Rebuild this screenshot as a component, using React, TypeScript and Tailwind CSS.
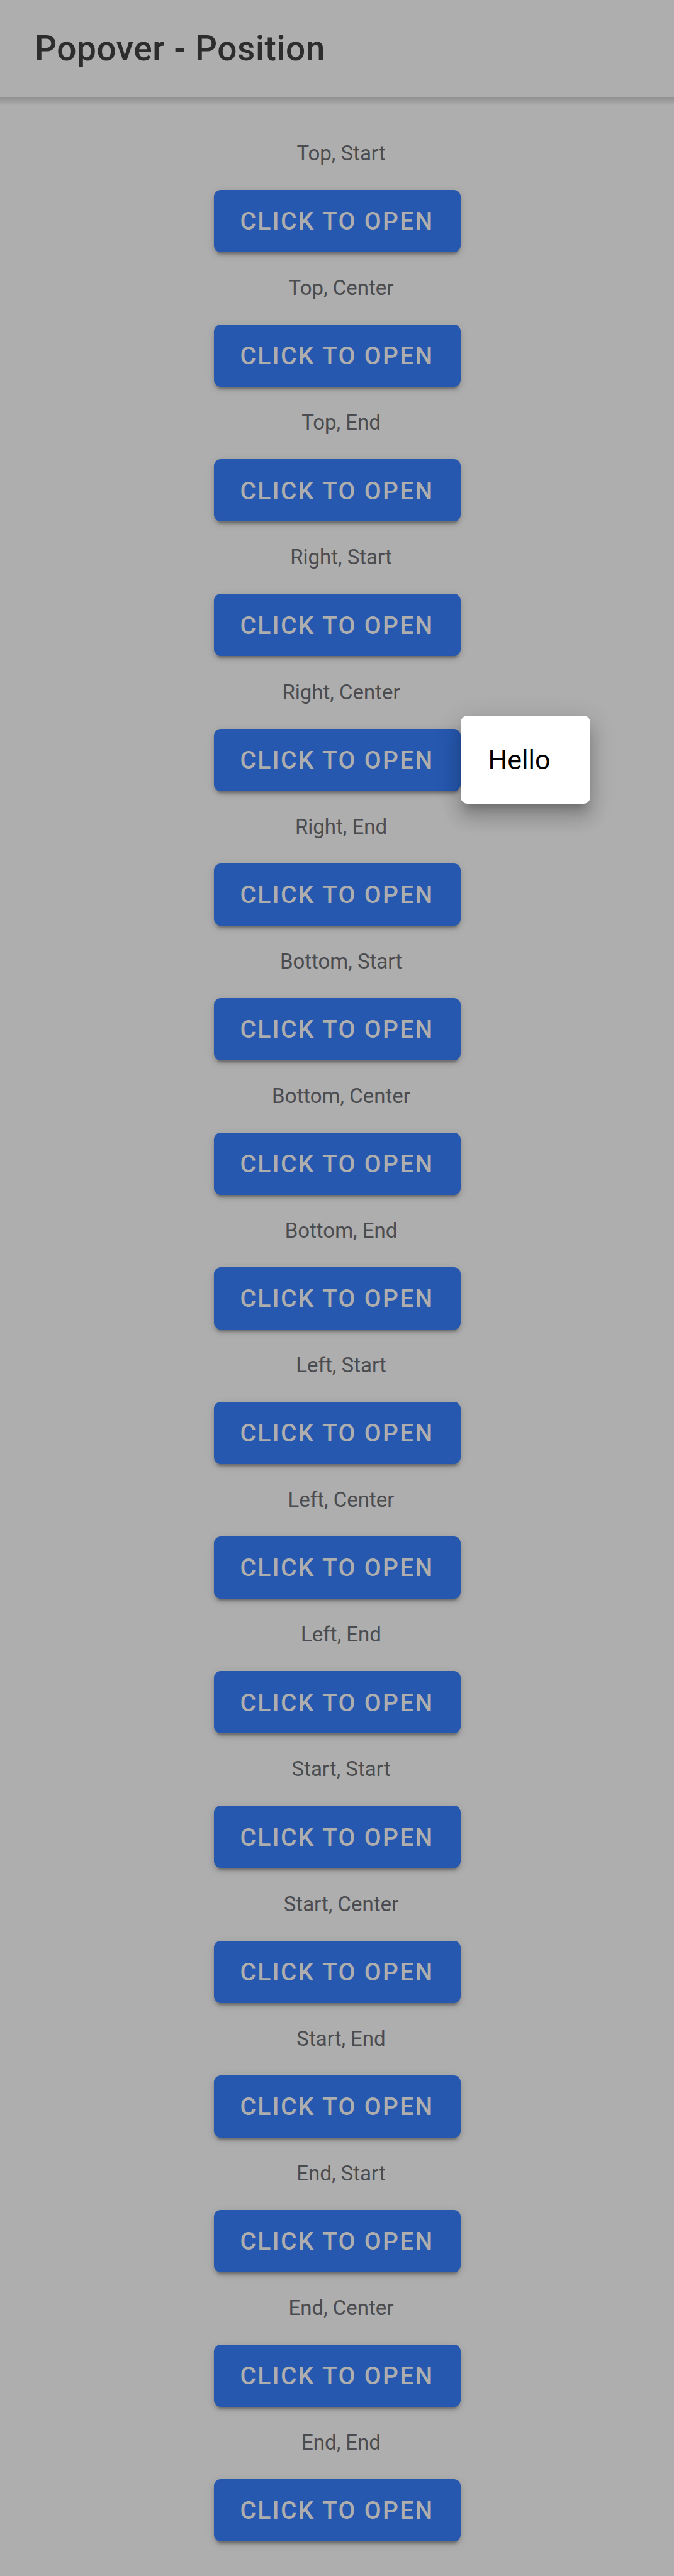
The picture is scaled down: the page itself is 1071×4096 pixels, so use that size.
const positions = [
  "Top, Start", "Top, Center", "Top, End",
  "Right, Start", "Right, Center", "Right, End",
  "Bottom, Start", "Bottom, Center", "Bottom, End",
  "Left, Start", "Left, Center", "Left, End",
  "Start, Start", "Start, Center", "Start, End",
  "End, Start", "End, Center", "End, End",
];

const openPosition = "Right, Center";

function PositionRow({ label, open }: { label: string; open: boolean }) {
  return (
    <section className="flex flex-1 flex-col items-center justify-end">
      <p className="pl-[13px] text-[33px] leading-[40px] text-[#4b4c50]">{label}</p>
      <div className="relative mt-[38px]">
        <button
          type="button"
          aria-label={`Click to open: ${label}`}
          aria-expanded={open}
          className="block h-[99px] w-[392px] rounded-[11px] bg-[#2658af] pt-[2px] text-center text-[39px] font-medium tracking-[0.06em] text-[#aeaeae] uppercase shadow-[0_8px_3px_-5px_rgba(0,0,0,0.2),0_5px_5px_0_rgba(0,0,0,0.14),0_3px_14px_0_rgba(0,0,0,0.12)]"
        >
          Click to open
        </button>
        {open && (
          <div
            role="dialog"
            aria-label="Popover"
            className="absolute top-1/2 left-full flex h-[140px] w-[206px] -translate-y-1/2 items-center rounded-[11px] bg-white px-[44px] text-[43px] text-black shadow-[0_14px_14px_-8px_rgba(0,0,0,0.2),0_22px_27px_3px_rgba(0,0,0,0.14),0_8px_38px_5px_rgba(0,0,0,0.12)]"
          >
            Hello
          </div>
        )}
      </div>
    </section>
  );
}

export default function App() {
  return (
    <div className="flex min-h-screen flex-col bg-[#aeaeae] font-['Roboto',sans-serif]">
      <header className="flex h-[154px] items-center px-[55px]">
        <h1 className="text-[55px] leading-[66px] font-medium tracking-[0.01em] text-[#2d2d2d]">
          Popover - Position
        </h1>
      </header>
      <div className="h-[14px] bg-linear-to-b from-[#8f8f8f] to-[#aeaeae]" />
      <main className="flex flex-1 flex-col pt-[19px] pb-[55px]">
        {positions.map((label) => (
          <PositionRow key={label} label={label} open={label === openPosition} />
        ))}
      </main>
    </div>
  );
}
